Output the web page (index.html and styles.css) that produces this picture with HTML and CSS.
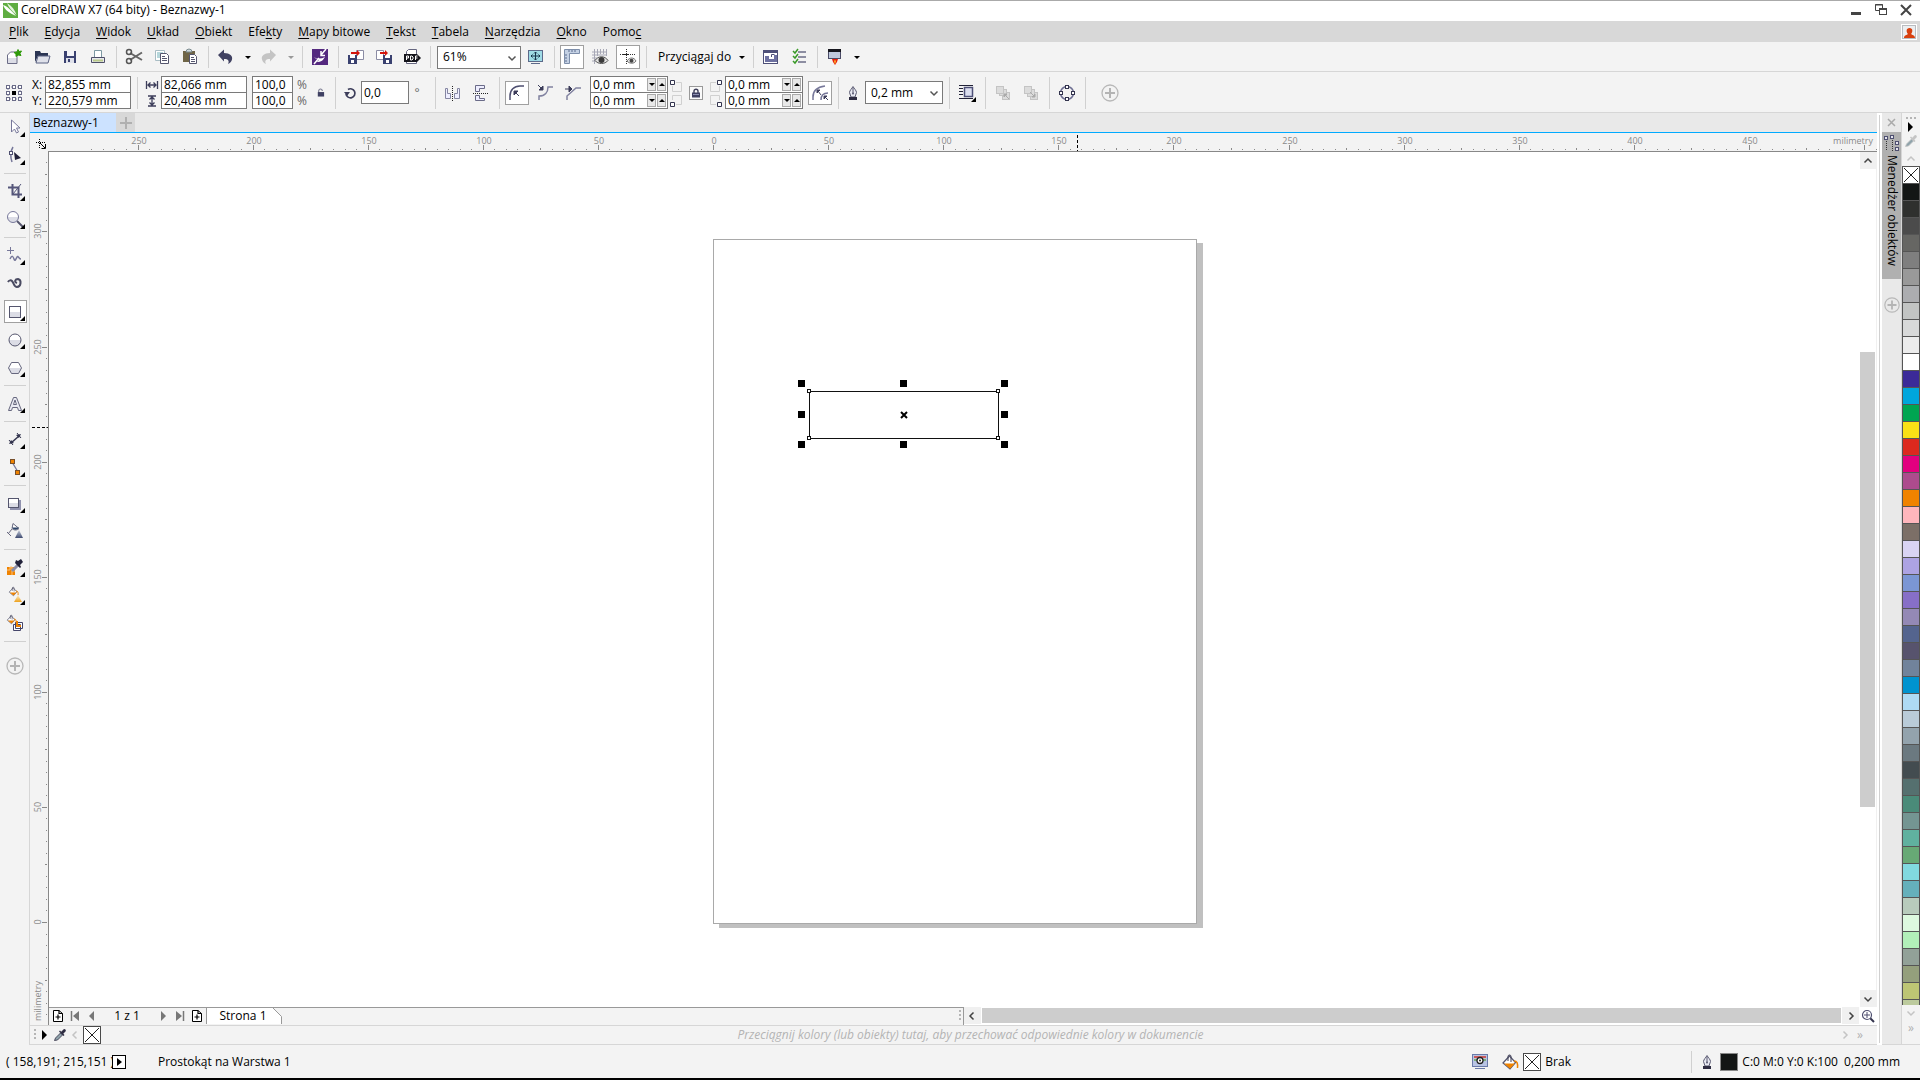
FILE: index.html
```html
<!DOCTYPE html>
<html lang="pl">
<head>
    <meta charset="UTF-8">
    <meta name="viewport" content="width=device-width, initial-scale=1.0">
    <title>CorelDRAW X7 (64 bity) - Beznazwy-1</title>
    <link rel="stylesheet" href="styles.css">
</head>
<body>
    <!-- shared symbols -->
    <svg class="sprite" aria-hidden="true">
        <defs>
            <linearGradient id="fade" x1="0" y1="0" x2="0" y2="1">
                <stop offset="0.5" stop-color="#ffffff"/>
                <stop offset="0.5" stop-color="#dcdde6"/>
            </linearGradient>
            <linearGradient id="goldCone" x1="0" y1="0" x2="0" y2="1">
                <stop offset="0" stop-color="#fdf0d0"/>
                <stop offset="1" stop-color="#eda11c"/>
            </linearGradient>
            <linearGradient id="blueCone" x1="0" y1="0" x2="0" y2="1">
                <stop offset="0" stop-color="#c9cfdc"/>
                <stop offset="1" stop-color="#3d4a70"/>
            </linearGradient>
        </defs>
        <symbol id="none" viewBox="0 0 18 18">
            <rect x="0.5" y="0.5" width="17" height="17" fill="#fff" stroke="#4a4a4a"/>
            <path d="M2 2l14 14M16 2L2 16" stroke="#222" fill="none"/>
        </symbol>
        <symbol id="plus" viewBox="0 0 20 20">
            <circle cx="10" cy="10" r="8" fill="none" stroke="#b8b8b8" stroke-width="1.3"/>
            <path d="M10 5v10M5 10h10" stroke="#b4b4b4" stroke-width="2"/>
        </symbol>
        <symbol id="pen" viewBox="0 0 20 20">
            <path d="M10 3.500c1 2 3.500 4 3.500 6L12 14H8L6.500 9.500c0-2 2.500-4 3.500-6z" fill="#e8e9f2" stroke="#5a5a72"/>
            <path d="M10 5v5" stroke="#5a5a72"/>
            <circle cx="10" cy="10.500" r="1" fill="#5a5a72"/>
            <rect x="6" y="14" width="8" height="3" fill="#2e2c42"/>
        </symbol>
        <symbol id="lock" viewBox="0 0 10 10">
            <path d="M3 5V3.200a2 2 0 0 1 4 0V5" fill="none" stroke="#3f3f5a" stroke-width="1.400"/>
            <rect x="1" y="4.500" width="8" height="5" fill="#3f4062"/>
            <path d="M2 6.500h6" stroke="#8c8fb0"/>
        </symbol>
        <symbol id="unlock" viewBox="0 0 10 10">
            <path d="M3 5V3.200a2 2 0 0 1 4 0" fill="none" stroke="#77788e" stroke-width="1.200"/>
            <rect x="2" y="4.500" width="7" height="5" fill="#3f4062"/>
        </symbol>
        <symbol id="dropper" viewBox="0 0 14 14">
            <path d="M1.500 12.500l1-2.500 5-5 2 2-5 5z" fill="#8fa3ab" stroke="currentColor" stroke-width="0.800"/>
            <path d="M6 3.500l4.500 4.500 1-1-1.200-1.200 2.400-2.600a1.500 1.500 0 0 0-2-2L8.200 3.700 7 2.500z" fill="currentColor"/>
        </symbol>
        <symbol id="page-add" viewBox="0 0 12 14">
            <path d="M1.500 1.500h5.500l3.500 3v8h-9z" fill="#fff" stroke="#000"/>
            <path d="M7 1.500v3h3.500M6 5.500v5M3.500 8h5" fill="none" stroke="#000" stroke-width="1.200"/>
        </symbol>
        <symbol id="chevron" viewBox="0 0 10 10">
            <path d="M1.500 3.500L5 7l3.500-3.500" fill="none" stroke="currentColor" stroke-width="1.500"/>
        </symbol>
        <symbol id="bucket" viewBox="0 0 18 18">
            <path d="M2 10l6.500-7 6 6.500L9 16z" fill="#fff" stroke="#55566e" stroke-width="1.200"/>
            <path d="M3 10.500h11L9 15.700z" fill="#f08300"/>
            <path d="M7 8V3.500a1.500 1.500 0 0 1 3 0V9" fill="none" stroke="#3d3d55"/>
            <path d="M13 8c3 0 4 2 3.500 7" fill="none" stroke="#f08300" stroke-width="1.500"/>
        </symbol>
    </svg>

    <header class="titlebar">
        <svg class="logo" width="15" height="15" viewBox="0 0 15 15">
            <rect width="15" height="15" fill="#5fad41"/>
            <path d="M0 2c4 1 8 5 13 11C6 10 2 7 0 2z" fill="#fff"/>
            <path d="M4 0c5 3 8 7 9.500 12C9 8 6 5 4 0z" fill="#e6f3df"/>
        </svg>
        <h1>CorelDRAW X7 (64 bity) - Beznazwy-1</h1>
        <div class="window-buttons">
            <button aria-label="Minimalizuj"><svg width="14" height="14"><rect x="2" y="9" width="10" height="3" fill="#444"/></svg></button>
            <button aria-label="Przywróć"><svg width="14" height="14"><path d="M1.500 1.500h7v6h-7zM1 2h8" fill="none" stroke="#444"/><rect x="5.500" y="5.500" width="7" height="6" fill="#fff" stroke="#444"/><path d="M5 6h8" stroke="#444" stroke-width="2"/></svg></button>
            <button aria-label="Zamknij"><svg width="14" height="14"><path d="M2 2l10 10M12 2L2 12" stroke="#444" stroke-width="2"/></svg></button>
        </div>
    </header>

    <nav class="menubar">
        <a href="#"><u>P</u>lik</a>
        <a href="#"><u>E</u>dycja</a>
        <a href="#"><u>W</u>idok</a>
        <a href="#"><u>U</u>kład</a>
        <a href="#"><u>O</u>biekt</a>
        <a href="#">Efe<u>k</u>ty</a>
        <a href="#"><u>M</u>apy bitowe</a>
        <a href="#"><u>T</u>ekst</a>
        <a href="#"><u>T</u>abela</a>
        <a href="#"><u>N</u>arzędzia</a>
        <a href="#"><u>O</u>kno</a>
        <a href="#">Pomo<u>c</u></a>
        <button class="account" aria-label="Konto">
            <svg width="16" height="16"><rect x="0.500" y="0.500" width="15" height="15" fill="#eceef0" stroke="#fff"/><rect x="1.500" y="1.500" width="13" height="13" fill="none" stroke="#b9bcc0"/><path d="M3 14c0-3 3-3 4-4-2-2-2-6 1.500-6s3.500 4 1.500 6c1 1 4 1 4 4z" fill="#d8400f"/></svg>
        </button>
    </nav>

    <div class="toolbar">
        <button class="tool" aria-label="Nowy"><svg width="20" height="20"><path d="M3.500 8l3-3h6.500v11.500H3.500z" fill="url(#fade)" stroke="#6b6c86"/><path d="M14 2.500l1 2 2.500-.5L16 6.500l1 2-3-.5-2 1.500V7l-2-1.500 3-.5z" fill="#2f9a0a" stroke="#2f9a0a"/></svg></button>
        <button class="tool" aria-label="Otwórz"><svg width="20" height="20"><path d="M3 15V4h5l1 2h7v3H6z" fill="#2b3553"/><path d="M6 9h12l-2 7H4z" fill="#dfe1ea" stroke="#5b6282"/></svg></button>
        <button class="tool" aria-label="Zapisz"><svg width="20" height="20"><path d="M4 4h12v12H4z" fill="#3a4170"/><rect x="7" y="4" width="7" height="5" fill="#f4f4f8"/><rect x="6" y="11" width="8" height="5" fill="#dfe1ea"/><rect x="8" y="12" width="2" height="3" fill="#3a4170"/></svg></button>
        <button class="tool" aria-label="Drukuj"><svg width="20" height="20"><path d="M6.500 11V3.500h7V11" fill="#fff" stroke="#7d99a3"/><path d="M3.500 10.500h13v5h-13z" fill="#e8e9ee" stroke="#4e4f68"/><path d="M5 13.500h10" stroke="#b9c98a" stroke-width="2"/></svg></button>
        <span class="sep"></span>
        <button class="tool" aria-label="Wytnij"><svg width="20" height="20"><path d="M6 6l12 7M6 13l12-7.500" stroke="#666" stroke-width="2"/><circle cx="5" cy="5" r="2.500" fill="none" stroke="#555" stroke-width="1.500"/><circle cx="5" cy="14" r="2.500" fill="none" stroke="#555" stroke-width="1.500"/></svg></button>
        <button class="tool" aria-label="Kopiuj"><svg width="20" height="20"><path d="M3.500 3.500h9v10h-9z" fill="#fff" stroke="#a9bdc4"/><path d="M5 6h6M5 8h3M5 10h3" stroke="#6fb0b8"/><path d="M8.500 6.500h6l2 2v8h-8z" fill="#fff" stroke="#55566e"/><path d="M10 9.500h3M10 11.500h5M10 13.500h5" stroke="#55566e"/></svg></button>
        <button class="tool" aria-label="Wklej"><svg width="20" height="20"><path d="M3 4h12v11H3z" fill="#6f6547"/><path d="M6 5a3 3 0 0 1 6 0z" fill="#cfd8da" stroke="#7c8c90"/><path d="M9.500 7.500h5l2 2v7h-7z" fill="#fff" stroke="#55566e"/><path d="M11 10.500h3M11 12.500h4M11 14.500h4" stroke="#55566e"/></svg></button>
        <span class="sep"></span>
        <button class="tool" aria-label="Cofnij"><svg width="20" height="20"><path d="M2 8l6-5.500v3.500c6 0 9 3 8 6.500-.5 2-2 3.500-4 4.500 1.500-3 .5-5-4-5v2.500z" fill="#414262"/></svg></button>
        <button class="caret" aria-label="Lista cofnij"></button>
        <button class="tool" aria-label="Ponów"><svg width="20" height="20"><path d="M17 8l-6-5.500v3.500c-6 0-9 3-8 6.500.5 2 2 3.500 4 4.500-1.500-3-.5-5 4-5v2.500z" fill="#c4c4c4"/></svg></button>
        <button class="caret dim" aria-label="Lista ponów"></button>
        <span class="sep"></span>
        <button class="tool" aria-label="Corel CONNECT"><svg width="20" height="20"><rect x="2" y="2" width="16" height="16" fill="#54297f"/><path d="M16 2l-5 6M11 4v4.500h4M4 17l5-6" fill="none" stroke="#fff" stroke-width="1.500"/><path d="M4 10c3 2 7 2 11 0-2 3-3 5-9 5 3-1 3-2 2-3-2 0-3-1-4-2z" fill="#fff"/></svg></button>
        <span class="sep"></span>
        <button class="tool" aria-label="Importuj"><svg width="20" height="20"><path d="M10.500 3.500h7v9h-7z" fill="#fff" stroke="#8b8ca4"/><path d="M2 8h9v9H2z" fill="#3a4170"/><path d="M4 8h5v3H4zM5 13h3v3H5z" fill="#fff"/><path d="M5 5h6V3l3 3-3 3V7H5z" fill="#d3140c"/></svg></button>
        <button class="tool" aria-label="Eksportuj"><svg width="20" height="20"><path d="M2.500 3.500h7v9h-7z" fill="#fff" stroke="#8b8ca4"/><path d="M9 8h9v9H9z" fill="#3a4170"/><path d="M11 8h5v3h-5zM12 13h3v3h-3z" fill="#fff"/><path d="M6 5h5V3l3 3-3 3V7H6z" fill="#d3140c"/></svg></button>
        <button class="tool" aria-label="Publikuj jako PDF"><svg width="20" height="20"><path d="M4.500 8V4.500l2-2h8V16.500h-10V14" fill="#fff" stroke="#666780"/><path d="M2 7h13l4 4-4 4H2z" fill="#15151c"/><path d="M4.500 13V9h2v2h-2M8.500 9v4h1.500l1-1v-2l-1-1zM13.500 13V9h2M13.500 11h2" fill="none" stroke="#fff"/></svg></button>
        <span class="sep"></span>
        <div class="combo zoom">
            <select aria-label="Powiększenie"><option>61%</option></select>
            <svg width="10" height="10"><use href="#chevron"/></svg>
        </div>
        <button class="tool screen" aria-label="Pełny ekran"><svg width="20" height="20"><rect x="2.500" y="3.500" width="14" height="11" fill="#9fdbe6" stroke="#5c6a8a"/><path d="M5 16.500h9" stroke="#5c6a8a"/><path d="M9.500 5v8M5 9h9M8 6.500l1.500-1.500L11 6.500M8 11.500L9.500 13l1.500-1.500M6.500 7.500L5 9l1.500 1.500M12.500 7.500L14 9l-1.500 1.500" fill="none" stroke="#16324a"/></svg></button>
        <span class="sep"></span>
        <button class="tool" aria-pressed="true" aria-label="Pokaż linijki"><svg width="20" height="20"><path d="M2.500 2.500h15v4h-10v10h-5z" fill="#c4d1e4" stroke="#7d8eaa"/><path d="M7 3v2M10 3v2M13 3v2M3 8h2M3 11h2M3 14h2" stroke="#5c6c8e"/></svg></button>
        <button class="tool" aria-label="Pokaż siatkę"><svg width="20" height="20"><path d="M2 5h15M2 8h15M2 11h5M2 14h4M4.500 2v15M7.500 2v7M10.500 2v5M13.500 2v5M16.500 2v7" stroke="#a7a8b6"/><path d="M5 13.500c3-5 10-5 13 0-3 4-10 4-13 0z" fill="#e2e2e2" stroke="#555"/><circle cx="11.500" cy="13" r="3" fill="#3a3a3a"/></svg></button>
        <button class="tool" aria-pressed="true" aria-label="Pokaż prowadnice"><svg width="20" height="20"><path d="M2 7.500h16M8.500 2v16" stroke="#333" stroke-dasharray="1 1"/><path d="M5 7.500h6" stroke="#222"/><path d="M9 14c2.500-4 7-4 9 0-2 3-6.500 3-9 0z" fill="#ececec" stroke="#777"/><circle cx="13.500" cy="13.700" r="2" fill="#444"/></svg></button>
        <span class="sep"></span>
        <button class="snap">Przyciągaj do<span class="arrow"></span></button>
        <span class="sep"></span>
        <button class="tool" aria-label="Okno powitalne"><svg width="20" height="20"><rect x="2.500" y="3.500" width="14" height="13" fill="#fff" stroke="#4e5078"/><path d="M2 4.500h15" stroke="#4e5078" stroke-width="3"/><path d="M4 9h4v3h5V8h3v7H4z" fill="#6d70a0"/><path d="M10.500 10V7.500h3" fill="none" stroke="#4e5078"/></svg></button>
        <button class="tool" aria-label="Opcje"><svg width="20" height="20"><path d="M9 5h8M9 10h8M9 15h8" stroke="#6c6d88" stroke-width="1.500"/><path d="M4 4l2 2 3-4M4 9l2 2 3-4M4 14l2 2 3-4" fill="none" stroke="#3a9a28" stroke-width="1.500"/></svg></button>
        <span class="sep"></span>
        <button class="tool" aria-label="Uruchamianie aplikacji"><svg width="20" height="20"><rect x="3.500" y="2.500" width="12" height="9" fill="#bfc8dc" stroke="#4a4b66"/><rect x="3" y="2" width="13" height="3" fill="#16161e"/><path d="M7 12h6l-1 3-2 3-2-3z" fill="#e8200c"/><path d="M9 13.500h2l-1 4z" fill="#ffc72c"/></svg></button>
        <button class="caret" aria-label="Lista aplikacji"></button>
    </div>

    <div class="toolbar property-bar">
        <button class="tool" aria-label="Początek obiektu"><svg width="20" height="20"><path d="M4 4h12v12H4z" fill="none" stroke="#8586a2" stroke-dasharray="2 1"/><g fill="#fff" stroke="#6a6b88"><rect x="2.500" y="2.500" width="3" height="3"/><rect x="8.500" y="2.500" width="3" height="3"/><rect x="14.500" y="2.500" width="3" height="3"/><rect x="2.500" y="8.500" width="3" height="3"/><rect x="14.500" y="8.500" width="3" height="3"/><rect x="2.500" y="14.500" width="3" height="3"/><rect x="8.500" y="14.500" width="3" height="3"/><rect x="14.500" y="14.500" width="3" height="3"/></g><rect x="8" y="8" width="4" height="4" fill="#000"/></svg></button>
        <div class="pair position">
            <label for="pos-x">X:</label><input id="pos-x" type="text" value="82,855 mm">
            <label for="pos-y">Y:</label><input id="pos-y" type="text" value="220,579 mm">
        </div>
        <span class="sep tall"></span>
        <div class="pair size">
            <label for="obj-w" aria-label="Szerokość"><svg width="14" height="12"><path d="M1.500 2v8M12.500 2v8M3 6h8M5.500 3.500L3 6l2.500 2.500M8.500 3.500L11 6 8.500 8.500" fill="none" stroke="#3c3d5a" stroke-width="1.300"/></svg></label><input id="obj-w" type="text" value="82,066 mm">
            <label for="obj-h" aria-label="Wysokość"><svg width="14" height="12"><path d="M3 1h8M3 11h8M7 2.500v7M4.500 4.500L7 2l2.500 2.500M4.500 7.500L7 10l2.500-2.500" fill="none" stroke="#3c3d5a" stroke-width="1.300"/></svg></label><input id="obj-h" type="text" value="20,408 mm">
        </div>
        <div class="pair scale">
            <input id="scale-x" type="text" value="100,0"><label for="scale-x">%</label>
            <input id="scale-y" type="text" value="100,0"><label for="scale-y">%</label>
        </div>
        <button class="narrow" aria-label="Zablokuj proporcje"><svg width="9" height="9"><use href="#unlock"/></svg></button>
        <span class="sep tall"></span>
        <label class="narrow" for="angle" aria-label="Kąt obrotu"><svg width="14" height="14"><path d="M3 8a4.500 4.500 0 1 0 2-4.500" fill="none" stroke="#3c3d5a" stroke-width="1.700"/><path d="M1 6h6L4 10z" fill="#3c3d5a"/></svg></label>
        <input id="angle" class="angle" type="text" value="0,0">
        <span class="degree">°</span>
        <span class="sep tall"></span>
        <button class="tool" aria-label="Odbij w poziomie"><svg width="20" height="20"><path d="M9.500 3v15" stroke="#222" stroke-dasharray="1 1"/><path d="M2.500 5.500h2v5h3v5h-5zM16.500 5.500h-2v5h-3v5h5z" fill="#eef" stroke="#8586a2"/></svg></button>
        <button class="tool" aria-label="Odbij w pionie"><svg width="20" height="20"><path d="M2 10.500h16" stroke="#222" stroke-dasharray="1 1"/><path d="M4.500 8.500v-6h9v3h-5v3zM4.500 12.500v5h9v-2h-5v-3z" fill="#eef" stroke="#6a6b88"/></svg></button>
        <span class="sep tall"></span>
        <button class="tool" aria-pressed="true" aria-label="Zaokrąglony narożnik"><svg width="20" height="20"><path d="M3 17v-4C3 7 7 3 13 3h4" fill="none" stroke="#4e4f70" stroke-width="1.500"/><path d="M7 8h4l-4 4zM8 9l4 4" fill="#3c3d5a" stroke="#3c3d5a"/></svg></button>
        <button class="tool" aria-label="Wklęsły narożnik"><svg width="20" height="20"><path d="M4 17v-4c6 0 9-4 9-9h5" fill="none" stroke="#8182a0" stroke-width="1.500"/><path d="M8 3v4H4zM3 2l4 4" fill="#3c3d5a" stroke="#3c3d5a"/></svg></button>
        <button class="tool" aria-label="Ścięty narożnik"><svg width="20" height="20"><path d="M4 17v-4l9-8h5" fill="none" stroke="#8182a0" stroke-width="1.500"/><path d="M2 6h5M6 3l3 3-3 3z" fill="#3c3d5a" stroke="#3c3d5a"/></svg></button>
        <div class="spins">
            <div class="spin"><input type="text" value="0,0 mm" aria-label="Promień lewy górny"><button class="down" aria-label="Mniej"></button><button class="up" aria-label="Więcej"></button></div>
            <div class="spin"><input type="text" value="0,0 mm" aria-label="Promień lewy dolny"><button class="down" aria-label="Mniej"></button><button class="up" aria-label="Więcej"></button></div>
        </div>
        <svg class="corners" width="18" height="30"><path d="M8 4.500h5.500v9h-9V8M4.500 22v-4.500h9v9H8" fill="none" stroke="#d0d0d0"/><path d="M2.500 2.500h4v4h-4zM2.500 24.500h4v4h-4z" fill="#fff" stroke="#33344e"/></svg>
        <button class="tool lock-all" aria-label="Edytuj narożniki razem"><svg width="14" height="14"><rect x="0.500" y="0.500" width="13" height="13" fill="#fafafa" stroke="#999"/><use href="#lock" x="2" y="2" width="10" height="10"/></svg></button>
        <svg class="corners" width="18" height="30"><path d="M10 4.500H4.500v9h9V8M13.500 22v-4.500h-9v9H10" fill="none" stroke="#d0d0d0"/><path d="M11.500 2.500h4v4h-4zM11.500 24.500h4v4h-4z" fill="#fff" stroke="#33344e"/></svg>
        <div class="spins after">
            <div class="spin"><input type="text" value="0,0 mm" aria-label="Promień prawy górny"><button class="down" aria-label="Mniej"></button><button class="up" aria-label="Więcej"></button></div>
            <div class="spin"><input type="text" value="0,0 mm" aria-label="Promień prawy dolny"><button class="down" aria-label="Mniej"></button><button class="up" aria-label="Więcej"></button></div>
        </div>
        <button class="tool" aria-pressed="true" aria-label="Względne skalowanie narożników"><svg width="20" height="20"><path d="M3 17v-3C3 7 7 4 15 3M11 17c0-5 2-7 7-7" fill="none" stroke="#77789a" stroke-width="1.500"/><path d="M7 7h3l-3 3zM14 13h3l-3 3zM8 8l3 4M15 14l3 3" fill="#3c3d5a" stroke="#3c3d5a"/></svg></button>
        <span class="sep tall"></span>
        <label class="narrow" for="outline" aria-label="Szerokość konturu"><svg width="20" height="20"><use href="#pen"/></svg></label>
        <div class="combo outline">
            <select id="outline"><option>0,2 mm</option></select>
            <svg width="10" height="10"><use href="#chevron"/></svg>
        </div>
        <span class="sep tall"></span>
        <button class="tool" aria-label="Zawijaj tekst"><svg width="20" height="20"><path d="M2 2.500h14M2 5.500h4M2 8.500h4M2 11.500h4M2 15.500h14" stroke="#222238"/><rect x="7.500" y="4.500" width="8" height="9" fill="#dcdff0" stroke="#4e5078" stroke-width="1.500"/><path d="M19 14v5h-5z" fill="#000"/></svg></button>
        <span class="sep tall"></span>
        <button class="tool" aria-label="Na wierzch"><svg width="20" height="20"><g fill="#dcdcdc" stroke="#c4c4c4"><rect x="9.500" y="9.500" width="7" height="7"/><rect x="6.500" y="6.500" width="7" height="6"/><rect x="3.500" y="3.500" width="7" height="7"/></g><path d="M11 11h3l-3 3zM12 12l4 4" fill="#aaa" stroke="#aaa"/></svg></button>
        <button class="tool" aria-label="Na spód"><svg width="20" height="20"><g fill="#dcdcdc" stroke="#c4c4c4"><rect x="9.500" y="9.500" width="7" height="7"/><rect x="6.500" y="6.500" width="7" height="7"/><rect x="3.500" y="3.500" width="7" height="7"/></g><path d="M14 11v3h-3zM9 9l4 4" fill="#aaa" stroke="#aaa"/></svg></button>
        <span class="sep tall"></span>
        <button class="tool" aria-label="Zamień na krzywe"><svg width="20" height="20"><circle cx="10" cy="10" r="6.500" fill="none" stroke="#6d6e92" stroke-width="1.500"/><g fill="#fff" stroke="#33344e"><rect x="8.500" y="2.500" width="3" height="3"/><rect x="8.500" y="14.500" width="3" height="3"/><rect x="2.500" y="8.500" width="3" height="3"/><rect x="14.500" y="8.500" width="3" height="3"/></g></svg></button>
        <span class="sep tall"></span>
        <button class="tool customize" aria-label="Szybkie dostosowanie"><svg width="20" height="20"><use href="#plus"/></svg></button>
    </div>

    <main class="workspace">
        <div class="toolbox">
            <button class="fly" aria-label="Wskaźnik"><svg width="28" height="28"><path d="M11.500 7v12l3-3 2 4 2-1-2-4h3.500z" fill="#fff" stroke="#77789a"/></svg></button>
            <button class="fly" aria-label="Kształt"><svg width="28" height="28"><path d="M13 6c-3 5-3 9-1 15" fill="none" stroke="#77789a" stroke-width="1.500"/><rect x="9.500" y="10.500" width="3" height="3" fill="#fff" stroke="#4e4f70"/><path d="M14 11l7 6-6 2z" fill="#22223a"/></svg></button>
            <span class="rule"></span>
            <button class="fly" aria-label="Kadrowanie"><svg width="28" height="28"><path d="M8 10.500h10.500V21M12.500 7v10.500H22" fill="none" stroke="#55567a" stroke-width="2"/><path d="M21 7l-8 10" stroke="#55567a"/></svg></button>
            <button class="fly" aria-label="Powiększenie"><svg width="28" height="28"><path d="M17 16l6 6" stroke="#55566e" stroke-width="2"/><circle cx="13" cy="12" r="5.500" fill="url(#fade)" stroke="#77789a"/></svg></button>
            <span class="rule"></span>
            <button class="fly" aria-label="Rysowanie odręczne"><svg width="28" height="28"><path d="M10.500 6v7M7 9.500h7" stroke="#77789a"/><path d="M10 18c2-4 3-3 4 0s2 0 3-2 2 2 4 2" fill="none" stroke="#77789a" stroke-width="1.500"/></svg></button>
            <button aria-label="Środki artystyczne"><svg width="28" height="28"><path d="M8 13c1-2 3-2 4-1 2 2 2 6 5 6 4 0 5-7 1-8-3 0-4 3-1 4" fill="none" stroke="#4a4b62" stroke-width="2"/></svg></button>
            <button class="fly" aria-pressed="true" aria-label="Prostokąt"><svg width="28" height="28"><rect x="9.500" y="9.500" width="11" height="11" fill="url(#fade)" stroke="#55566e"/></svg></button>
            <button class="fly" aria-label="Elipsa"><svg width="28" height="28"><circle cx="15" cy="15" r="6" fill="url(#fade)" stroke="#55566e"/></svg></button>
            <button class="fly" aria-label="Wielokąt"><svg width="28" height="28"><path d="M8.500 15l3-5.500h7l3 5.500-3 5.500h-7z" fill="url(#fade)" stroke="#66677e"/></svg></button>
            <span class="rule"></span>
            <button class="fly" aria-label="Tekst"><svg width="28" height="28"><path d="M8.500 21.500l5-13h3l5 13h-3l-1-3h-5l-1 3zM13.500 15.500h3l-1.500-4.500z" fill="#e9eaf2" stroke="#66677e"/></svg></button>
            <span class="rule"></span>
            <button class="fly" aria-label="Wymiar równoległy"><svg width="28" height="28"><path d="M11 18l8-7" stroke="#33344e" stroke-width="1.500"/><path d="M9 15l4 5M17 8l4 5" stroke="#33344e"/><path d="M9 19l5-1-3-3zM21 9l-5 1 3 3z" fill="#33344e"/></svg></button>
            <button class="fly" aria-label="Łącznik prosty"><svg width="28" height="28"><path d="M12 9l6 10" stroke="#77789a" stroke-width="1.300"/><rect x="10.500" y="6.500" width="4" height="4" fill="#f08300" stroke="#77502c"/><rect x="15.500" y="17.500" width="4" height="4" fill="#f08300" stroke="#77502c"/></svg></button>
            <span class="rule"></span>
            <button class="fly" aria-label="Cień"><svg width="28" height="28"><rect x="10" y="11" width="11" height="10" fill="#9092ae"/><rect x="8.500" y="9.500" width="10" height="9" fill="url(#fade)" stroke="#55566e"/></svg></button>
            <button aria-label="Przezroczystość"><svg width="28" height="28"><path d="M13 6.500l6 5c-2 2-5 2-7 0zM12 12l-4 5M7 15l4 4" fill="#fff" stroke="#66677e"/><path d="M12 10.500h7c-2 3-5 3-7 0z" fill="#2c4468"/><path d="M19 13l4 8h-8z" fill="url(#blueCone)"/></svg></button>
            <span class="rule"></span>
            <button class="fly" aria-label="Zakraplacz koloru"><svg width="28" height="28"><path d="M7 14h8v8H7z" fill="#f08300"/><path d="M7 17h3v-3h2v8M12 18h3" fill="none" stroke="#f9c07a"/><path d="M12 18l6-6" stroke="#8a8ba4" stroke-width="3"/><path d="M15 10l5 5 1-1-1-2 3-3-2-3-3 2-2-1z" fill="#22223a"/></svg></button>
            <button class="fly" aria-label="Wypełnienie interaktywne"><svg width="28" height="28"><use href="#bucket" x="8" y="5" width="11" height="11"/><path d="M18 14l4 7h-8z" fill="url(#goldCone)"/></svg></button>
            <button aria-label="Inteligentne wypełnienie"><svg width="28" height="28"><use href="#bucket" x="6" y="5" width="11" height="11"/><path d="M13.500 15.500h7v6h-7zM15.500 13.500h7v6h-7z" fill="#fff" stroke="#44456a"/><path d="M17 12v5h4" fill="none" stroke="#f08300" stroke-width="2"/></svg></button>
            <span class="rule"></span>
            <button class="customize" aria-label="Szybkie dostosowanie"><svg width="20" height="20"><use href="#plus"/></svg></button>
        </div>

        <div class="document">
            <div class="tabs">
                <button class="tab">Beznazwy-1</button>
                <button class="new-tab" aria-label="Nowy dokument"><svg width="12" height="12"><path d="M6 0v12M0 6h12" stroke="#b0b0b0" stroke-width="2"/></svg></button>
            </div>
            <div class="ruler-row">
                <svg id="ruler-h" class="ruler-h"></svg>
            </div>
            <div class="view">
                <svg id="ruler-v" class="ruler-v"></svg>
                <div class="pane">
                    <div class="canvas-row">
                        <div class="canvas">
                            <div class="page"></div>
                            <svg class="selection" width="220" height="80">
                                <rect x="16.500" y="16.500" width="189" height="47" fill="none" stroke="#111"/>
                                <path d="M108 37l6 6M114 37l-6 6" stroke="#000" stroke-width="2"/>
                                <g fill="#fff" stroke="#111"><rect x="14.500" y="14.500" width="3" height="3"/><rect x="203.500" y="14.500" width="3" height="3"/><rect x="14.500" y="61.500" width="3" height="3"/><rect x="203.500" y="61.500" width="3" height="3"/></g>
                                <g fill="#000"><rect x="5" y="5" width="7" height="7"/><rect x="107" y="5" width="7" height="7"/><rect x="208" y="5" width="7" height="7"/><rect x="5" y="36" width="7" height="7"/><rect x="208" y="36" width="7" height="7"/><rect x="5" y="66" width="7" height="7"/><rect x="107" y="66" width="7" height="7"/><rect x="208" y="66" width="7" height="7"/></g>
                            </svg>
                        </div>
                        <div class="vscroll">
                            <button class="scroll-btn up-btn" aria-label="W górę"><svg width="10" height="10"><use href="#chevron"/></svg></button>
                            <span class="track"></span>
                            <span class="thumb"></span>
                            <span class="track"></span>
                            <button class="scroll-btn" aria-label="W dół"><svg width="10" height="10"><use href="#chevron"/></svg></button>
                        </div>
                    </div>
                    <div class="page-row">
                        <div class="page-nav">
                            <button aria-label="Dodaj stronę przed"><svg width="12" height="14"><use href="#page-add"/></svg></button>
                            <button aria-label="Pierwsza strona"><svg width="12" height="12"><path d="M2.500 1v10" stroke="#777" stroke-width="1.500"/><path d="M10 1v10L4 6z" fill="#777"/></svg></button>
                            <button aria-label="Poprzednia strona"><svg width="12" height="12"><path d="M8 1v10L3 6z" fill="#777"/></svg></button>
                            <span class="count">1 z 1</span>
                            <button aria-label="Następna strona"><svg width="12" height="12"><path d="M4 1v10l5-5z" fill="#777"/></svg></button>
                            <button aria-label="Ostatnia strona"><svg width="12" height="12"><path d="M9.500 1v10" stroke="#777" stroke-width="1.500"/><path d="M2 1v10l6-5z" fill="#777"/></svg></button>
                            <button aria-label="Dodaj stronę po"><svg width="12" height="14"><use href="#page-add"/></svg></button>
                            <button class="page-tab">Strona 1</button>
                            <svg width="9" height="16"><path d="M0 0l8 8v8H0z" fill="#fff"/><path d="M0 0l8.500 8.500V16" fill="none" stroke="#999"/></svg>
                            <span class="grip"></span>
                        </div>
                        <div class="hscroll">
                            <button class="scroll-btn left-btn" aria-label="W lewo"><svg width="10" height="10"><use href="#chevron"/></svg></button>
                            <span class="thumb"></span>
                            <button class="scroll-btn right-btn" aria-label="W prawo"><svg width="10" height="10"><use href="#chevron"/></svg></button>
                            <button class="navigator" aria-label="Nawigator"><svg width="14" height="14"><path d="M9 9l4 4" stroke="#33344e" stroke-width="2"/><circle cx="6" cy="6" r="4.500" fill="#fff" stroke="#4e4f70" stroke-width="1.200"/><path d="M6 3v6M3 6h6" stroke="#4e4f70"/></svg></button>
                        </div>
                    </div>
                </div>
            </div>
            <div class="tray">
                <span class="grip"></span>
                <button class="play" aria-label="Menu palety"><svg width="8" height="10"><path d="M1 0v10l5-5z" fill="#000"/></svg></button>
                <button class="dark" aria-label="Zakraplacz"><svg width="14" height="14"><use href="#dropper"/></svg></button>
                <button class="dim left-btn" aria-label="Przewiń w lewo"><svg width="10" height="10"><use href="#chevron"/></svg></button>
                <button class="nofill" aria-label="Brak koloru"><svg width="18" height="18"><use href="#none"/></svg></button>
                <em>Przeciągnij kolory (lub obiekty) tutaj, aby przechować odpowiednie kolory w dokumencie</em>
                <button class="dim right-btn" aria-label="Przewiń w prawo"><svg width="10" height="10"><use href="#chevron"/></svg></button>
                <button class="dim more" aria-label="Więcej">»</button>
            </div>
        </div>

        <div class="splitter"></div>

        <aside class="docker">
            <button class="close" aria-label="Zamknij okno dokowane"><svg width="9" height="9"><path d="M1 1l7 7M8 1L1 8" stroke="#aaa" stroke-width="1.500"/></svg></button>
            <button class="docker-tab">
                <svg width="16" height="16"><path d="M2.500 4v12M8.500 5v11" stroke="#333" stroke-dasharray="1 1"/><g fill="#e4e4ee" stroke="#4e4f70"><rect x="0.500" y="1.500" width="3" height="3"/><rect x="6.500" y="0.500" width="3" height="3"/><rect x="11.500" y="6.500" width="3" height="3"/><rect x="11.500" y="12.500" width="3" height="3"/></g></svg>
                <span>Menedżer obiektów</span>
            </button>
            <button class="customize" aria-label="Szybkie dostosowanie"><svg width="18" height="18"><use href="#plus"/></svg></button>
        </aside>

        <aside class="palette">
            <span class="grip-h"></span>
            <button class="play" aria-label="Menu palety"><svg width="8" height="10"><path d="M1 0v10l5-5z" fill="#000"/></svg></button>
            <button class="dim dropper" aria-label="Zakraplacz"><svg width="14" height="14"><use href="#dropper"/></svg></button>
            <button class="dim up-btn chev" aria-label="Przewiń w górę"><svg width="10" height="10"><use href="#chevron"/></svg></button>
            <div id="swatches" class="swatches">
                <button class="swatch" aria-label="Brak koloru"><svg width="16" height="16" viewBox="1 1 16 16"><use href="#none" width="18" height="18"/></svg></button>
            </div>
            <button class="dim chev" aria-label="Przewiń w dół"><svg width="10" height="10"><use href="#chevron"/></svg></button>
            <button class="dim more" aria-label="Więcej">»</button>
        </aside>
    </main>

    <footer class="statusbar">
        <span class="coords">( 158,191; 215,151 )</span>
        <button aria-label="Menu współrzędnych"><svg width="14" height="14"><rect x="0.500" y="0.500" width="13" height="13" fill="#fff" stroke="#000"/><path d="M5 3v8l5-4z" fill="#000"/></svg></button>
        <span class="object">Prostokąt na Warstwa 1</span>
        <svg class="proof" width="16" height="16"><rect x="0.500" y="0.500" width="15" height="12" fill="#b9c4e4" stroke="#6a7aa8"/><path d="M2 3h12" stroke="#c85a5a" stroke-width="2"/><path d="M2 6h12" stroke="#7ab07a" stroke-width="2"/><circle cx="8" cy="6.500" r="3" fill="#fff" stroke="#222" stroke-width="1.300"/><circle cx="8" cy="6.500" r="1" fill="#222"/><path d="M3 14.500h10" stroke="#6a7aa8"/></svg>
        <svg class="bucket" width="18" height="18"><use href="#bucket"/></svg>
        <svg width="18" height="18"><use href="#none"/></svg>
        <span class="fill-name">Brak</span>
        <span class="sep"></span>
        <svg class="pen" width="20" height="20"><use href="#pen"/></svg>
        <span class="outline-color"></span>
        <span class="outline-name">C:0 M:0 Y:0 K:100&nbsp; 0,200 mm</span>
    </footer>

    <script>
        const SVG = 'http://www.w3.org/2000/svg';
        const STEP = 11.51; // 5 mm przy 61%

        const kolory = [
            '#131615', '#2f302e', '#4b4b4b', '#666663', '#7f7f7f', '#999999', '#acadb0', '#c2c4c3', '#d8d9d9', '#ececec',
            '#ffffff', '#3b2a98', '#00a6dc', '#00a551', '#fae016', '#dc291e', '#e2007f', '#ad4b8d', '#f08300', '#ffb6bc',
            '#7c6f67', '#d9d4f4', '#ada3e3', '#7b96d4', '#876fc7', '#9489b5', '#54648e', '#57536d', '#71839b', '#0093cf',
            '#aedaf4', '#b9cbd8', '#93a3ad', '#6b7980', '#434c50', '#55706f', '#4a8b79', '#749592', '#60b19f', '#67a975',
            '#81d9df', '#65b0bb', '#b8cbbc', '#ddf9df', '#b2f0b9', '#92a198', '#949f7c', '#bdc574', '#bcca9d'
        ];

        function dodaj(parent, name, attrs, text) {
            const el = document.createElementNS(SVG, name);
            for (const key in attrs) {
                el.setAttribute(key, attrs[key]);
            }
            if (text !== undefined) {
                el.textContent = text;
            }
            parent.appendChild(el);
        }

        function kreska(i) {
            if (i % 10 === 0) return 5;
            return i % 5 === 0 ? 2 : 1;
        }

        function linijkaPozioma() {
            const svg = document.getElementById('ruler-h');
            const width = svg.clientWidth;
            const zero = 683;
            for (let i = -54; zero + i * STEP < width; i++) {
                const x = Math.round(zero + i * STEP);
                const h = kreska(i);
                dodaj(svg, 'rect', { x: x, y: 17 - h, width: 1, height: h });
                if (i % 10 === 0 && x < width - 40) {
                    dodaj(svg, 'text', { x: x + 1, y: 11, 'text-anchor': 'middle' }, Math.abs(i * 5));
                }
            }
            dodaj(svg, 'text', { x: width - 4, y: 11, 'text-anchor': 'end' }, 'milimetry');
            // pozycja kursora
            dodaj(svg, 'path', { class: 'cursor', d: 'M1047.5 2v16' });
            // początek układu
            dodaj(svg, 'path', { class: 'origin', d: 'M6 9.5h9M9.500 6v9' });
            dodaj(svg, 'path', { class: 'origin arrow-line', d: 'M10 10l5 5M15.500 11v4.500h-4' });
        }

        function linijkaPionowa() {
            const svg = document.getElementById('ruler-v');
            const height = svg.clientHeight;
            const zero = 771;
            for (let i = 66; zero - i * STEP < height; i--) {
                const y = Math.round(zero - i * STEP);
                const w = kreska(i);
                dodaj(svg, 'rect', { x: 17 - w, y: y, width: w, height: 1 });
                if (i % 10 === 0) {
                    dodaj(svg, 'text', { x: 0, y: 0, 'text-anchor': 'middle', transform: 'translate(11 ' + y + ') rotate(-90)' }, Math.abs(i * 5));
                }
            }
            dodaj(svg, 'text', { x: 0, y: 0, transform: 'translate(11 ' + (height - 4) + ') rotate(-90)' }, 'milimetry');
            dodaj(svg, 'path', { class: 'cursor', d: 'M2 276.5h16' });
        }

        function paleta() {
            const swatches = document.getElementById('swatches');
            kolory.forEach((kolor) => {
                const btn = document.createElement('button');
                btn.className = 'swatch';
                btn.style.backgroundColor = kolor;
                btn.setAttribute('aria-label', kolor);
                swatches.appendChild(btn);
            });
        }

        linijkaPozioma();
        linijkaPionowa();
        paleta();
    </script>
</body>
</html>
```
FILE: styles.css
```css
* {
    box-sizing: border-box;
}

body {
    margin: 0;
    height: 100vh;
    display: flex;
    flex-direction: column;
    overflow: hidden;
    border-top: 1px solid #aaa;
    border-bottom: 2px solid #000;
    background-color: #f3f3f3;
    color: #000;
    font: 12px/16px "Open Sans", "Noto Sans", sans-serif;
}

button,
input,
select {
    font: inherit;
    color: inherit;
}

button {
    display: flex;
    align-items: center;
    justify-content: center;
    flex: none;
    padding: 0;
    border: none;
    background: none;
}

svg {
    flex: none;
    display: block;
}

.sprite {
    position: absolute;
    width: 0;
    height: 0;
}

/* title and menu */
.titlebar {
    display: flex;
    align-items: center;
    height: 20px;
    padding: 0 7px 2px 3px;
    background-color: #fff;
}

.titlebar h1 {
    margin: 0 auto 0 3px;
    font-size: 12px;
    font-weight: normal;
}

.window-buttons {
    display: flex;
    gap: 11px;
}

.menubar {
    display: flex;
    align-items: center;
    gap: 16px;
    height: 21px;
    padding: 0 3px 0 9px;
    background-color: #d8d8d8;
}

.menubar a {
    color: #000;
    text-decoration: none;
}

.menubar u {
    text-underline-offset: 2px;
}

.account {
    margin-left: auto;
}

/* toolbars */
.toolbar {
    display: flex;
    align-items: center;
    height: 30px;
    padding-top: 1px;
    border-bottom: 1px solid #d6d6d6;
}

.property-bar {
    height: 41px;
}

.tool {
    width: 28px;
    height: 28px;
}

.tool[aria-pressed="true"] {
    width: 24px;
    height: 24px;
    margin: 0 2px;
    border: 1px solid #a0a0a0;
    background-color: #fff;
}

.narrow {
    display: flex;
    justify-content: center;
    width: 22px;
}

.sep {
    flex: none;
    width: 1px;
    height: 22px;
    margin: 0 3px 0 4px;
    background-color: #d0d0d0;
}

.sep.tall {
    height: 32px;
}

.caret {
    width: 15px;
    height: 22px;
}

.caret::after,
.arrow {
    content: "";
    border: 3px solid transparent;
    border-top-color: #000;
    border-bottom: none;
}

.caret.dim::after {
    border-top-color: #999;
}

.snap {
    justify-content: flex-start;
    gap: 8px;
    width: 99px;
    padding-left: 8px;
    white-space: nowrap;
}

.combo {
    position: relative;
    height: 23px;
}

.combo select {
    appearance: none;
    width: 100%;
    height: 100%;
    padding: 0 5px;
    border: 1px solid #7a7a7a;
    border-radius: 0;
    background-color: #fff;
}

.combo svg {
    position: absolute;
    right: 4px;
    top: 7px;
    color: #555;
    pointer-events: none;
}

.zoom {
    width: 84px;
    margin: 0 1px 0 3px;
}

.outline {
    width: 78px;
    margin: 0 2px 0 1px;
}

.pair {
    display: grid;
    grid-template-rows: 17px 16px;
    align-items: center;
}

.pair input,
.spin {
    width: 100%;
    height: 17px;
    border: 1px solid #7a7a7a;
    background-color: #fff;
}

.pair input {
    padding: 0 2px;
}

/* neighbouring rows share one border line */
.pair label + input ~ label + input,
.scale label + input,
.spin + .spin {
    height: 16px;
    border-top: none;
}

.position {
    grid-template-columns: 13px 86px;
    margin: 0 2px 0 4px;
}

.size {
    grid-template-columns: 18px 86px;
    margin: 0 5px 0 2px;
}

.size label {
    display: flex;
    justify-content: center;
}

.scale {
    grid-template-columns: 41px 16px;
}

.scale label {
    text-align: right;
    padding-right: 2px;
    color: #666;
}

.angle {
    width: 48px;
    height: 23px;
    padding: 0 2px;
    border: 1px solid #7a7a7a;
}

.degree {
    width: 16px;
    margin-right: 6px;
    text-align: center;
    color: #666;
}

.spins {
    width: 78px;
    margin-left: 3px;
}

.spins.after {
    margin: 0 3px 0 1px;
}

.spin {
    display: flex;
    gap: 1px;
    padding: 1px 1px 1px 0;
}

.spin input {
    flex: 1;
    min-width: 0;
    padding: 0 2px;
    border: none;
    background: none;
    line-height: 14px;
}

.spin button {
    width: 9px;
    border: 1px solid #aaa;
    background-color: #e8e8e8;
}

.spin button::after {
    content: "";
    border: 3px solid transparent;
}

.spin .down::after {
    border-top-color: #000;
    border-bottom: none;
}

.spin .up::after {
    border-bottom-color: #000;
    border-top: none;
}

.tool.lock-all {
    width: 20px;
}

.tool.customize {
    width: 42px;
}

/* workspace */
.workspace {
    flex: 1;
    display: flex;
    min-height: 0;
}

.toolbox {
    display: flex;
    flex-direction: column;
    width: 30px;
    border-right: 1px solid #d6d6d6;
}

.toolbox button {
    position: relative;
    justify-content: flex-start;
    height: 28px;
}

.toolbox .fly::after {
    content: "";
    position: absolute;
    right: 4px;
    bottom: 4px;
    border-left: 5px solid transparent;
    border-bottom: 5px solid #000;
}

.toolbox button[aria-pressed="true"] {
    z-index: 0;
}

.toolbox button[aria-pressed="true"]::before {
    content: "";
    position: absolute;
    z-index: -1;
    inset: 3px 2px 2px 4px;
    border: 1px solid #a0a0a0;
    background-color: #fff;
}

.rule {
    flex: none;
    height: 1px;
    margin: 4px 3px 3px 4px;
    background-color: #d0d0d0;
}

.toolbox .customize {
    justify-content: center;
    height: 42px;
}

.document {
    flex: 1;
    display: flex;
    flex-direction: column;
    min-width: 0;
}

.tabs {
    display: flex;
    height: 20px;
    border-bottom: 1px solid #00aaff;
    background-color: #e9e9e9;
}

.tab {
    justify-content: flex-start;
    width: 86px;
    padding-left: 3px;
    background-color: #cce2ff;
}

.new-tab {
    width: 19px;
    background-color: #d8d8d8;
}

.ruler-row {
    height: 18px;
}

.ruler-h {
    width: 100%;
    height: 18px;
}

.ruler-v {
    width: 18px;
    height: 100%;
}

.ruler-h,
.ruler-v {
    fill: #8a8a8a;
    font-size: 9px;
}

.cursor {
    stroke: #000;
    stroke-dasharray: 3 2;
}

.origin {
    fill: none;
    stroke: #000;
    stroke-dasharray: 1 1;
}

.arrow-line {
    stroke-dasharray: none;
}

.view {
    flex: 1;
    display: flex;
    min-height: 0;
}

.pane {
    flex: 1;
    display: flex;
    flex-direction: column;
    min-width: 0;
    border-top: 1px solid #888;
    border-left: 1px solid #888;
}

.canvas-row {
    flex: 1;
    display: flex;
    min-height: 0;
    background-color: #fff;
}

.canvas {
    position: relative;
    flex: 1;
    overflow: hidden;
}

.page {
    position: absolute;
    left: 664px;
    top: 87px;
    width: 484px;
    height: 685px;
    border: 1px solid #a9a9a9;
    background-color: #fff;
    box-shadow: 6px 4px 0 #c0c0c0;
}

.selection {
    position: absolute;
    left: 744px;
    top: 223px;
}

.vscroll {
    display: flex;
    flex-direction: column;
    width: 17px;
    border-right: 1px solid #f0f0f0;
}

.scroll-btn {
    width: 16px;
    height: 17px;
    background-color: #f0f0f0;
    color: #444;
}

.up-btn svg {
    transform: rotate(180deg);
}

.left-btn svg {
    transform: rotate(90deg);
}

.right-btn svg {
    transform: rotate(-90deg);
}

.thumb {
    background-color: #cdcdcd;
}

.vscroll .thumb {
    flex: 455;
    width: 15px;
}

.track {
    flex: 183;
}

.page-row {
    display: flex;
    height: 18px;
    background-color: #f3f3f3;
}

.page-nav {
    flex: 1;
    display: flex;
    align-items: center;
    padding-bottom: 1px;
    border-top: 1px solid #999;
    border-right: 1px solid #999;
}

.page-nav button {
    width: 17px;
}

.page-nav .count {
    width: 54px;
    text-align: center;
}

.page-nav .page-tab {
    width: 67px;
    height: 16px;
    padding-left: 6px;
    margin-left: 1px;
    border-left: 1px solid #999;
    background-color: #fff;
}

.grip {
    width: 2px;
    height: 12px;
    margin-left: auto;
    margin-right: 2px;
    background: repeating-linear-gradient(#b5b5b5 0 2px, transparent 2px 4px);
}

.hscroll {
    flex: 1;
    display: flex;
    align-items: flex-start;
    background-color: #fff;
}

.hscroll .thumb {
    flex: 1;
    height: 15px;
    margin: 1px 1px 0;
}

.hscroll .scroll-btn {
    width: 17px;
}

.navigator {
    width: 18px;
    height: 17px;
}

.tray {
    display: flex;
    align-items: center;
    height: 20px;
    padding: 0 7px 0 4px;
    border-top: 1px solid #d6d6d6;
    border-bottom: 1px solid #d6d6d6;
}

.tray .grip {
    margin: 0;
}

.tray .play {
    margin-left: 5px;
}

.tray .dark {
    margin-left: 4px;
    color: #2e2c42;
}

.tray .left-btn {
    margin: 0 3px;
}

.tray em {
    flex: 1;
    text-align: center;
    color: #b4b4b4;
}

.dim {
    color: #c4c4c4;
}

.more {
    width: 20px;
    color: #b0b0b0;
    line-height: 12px;
}

.splitter {
    width: 5px;
    border: 2px solid #fff;
    background-color: #d0d0d0;
}

.docker {
    display: flex;
    flex-direction: column;
    width: 19px;
    background-color: #e9e9e9;
    border-bottom: 1px solid #d6d6d6;
}

.docker .close {
    height: 19px;
}

.docker-tab {
    flex-direction: column;
    justify-content: flex-start;
    gap: 4px;
    height: 147px;
    padding-top: 3px;
    background-color: #b0b0b0;
}

.docker-tab span {
    writing-mode: vertical-rl;
    white-space: nowrap;
}

.docker .customize {
    height: 52px;
}

.palette {
    display: flex;
    flex-direction: column;
    align-items: center;
    width: 19px;
    border-left: 1px solid #d6d6d6;
    border-bottom: 1px solid #d6d6d6;
}

.grip-h {
    width: 10px;
    height: 2px;
    margin: 4px 0 3px;
    background: repeating-linear-gradient(90deg, #b5b5b5 0 2px, transparent 2px 4px);
}

.palette .play {
    height: 9px;
}

.palette .dropper {
    height: 20px;
}

.palette .chev {
    height: 15px;
}

.swatches {
    flex: 1;
    min-height: 0;
    width: 18px;
    overflow: hidden;
    background-color: #555;
}

.swatch {
    width: 16px;
    height: 16px;
    margin: 1px 1px 0;
}

.palette .more {
    height: 24px;
    padding-bottom: 8px;
}

/* status bar */
.statusbar {
    display: flex;
    align-items: center;
    height: 33px;
    padding: 0 20px 0 6px;
    white-space: nowrap;
}

.coords {
    width: 106px;
}

.object {
    margin: 0 auto 0 32px;
}

.statusbar .bucket {
    margin: 0 4px 0 13px;
}

.fill-name {
    width: 142px;
    margin-left: 4px;
}

.statusbar .pen {
    margin: 0 3px 0 2px;
}

.outline-color {
    width: 18px;
    height: 18px;
    margin-right: 4px;
    border: 1px solid #888;
    background-color: #131615;
}
```
